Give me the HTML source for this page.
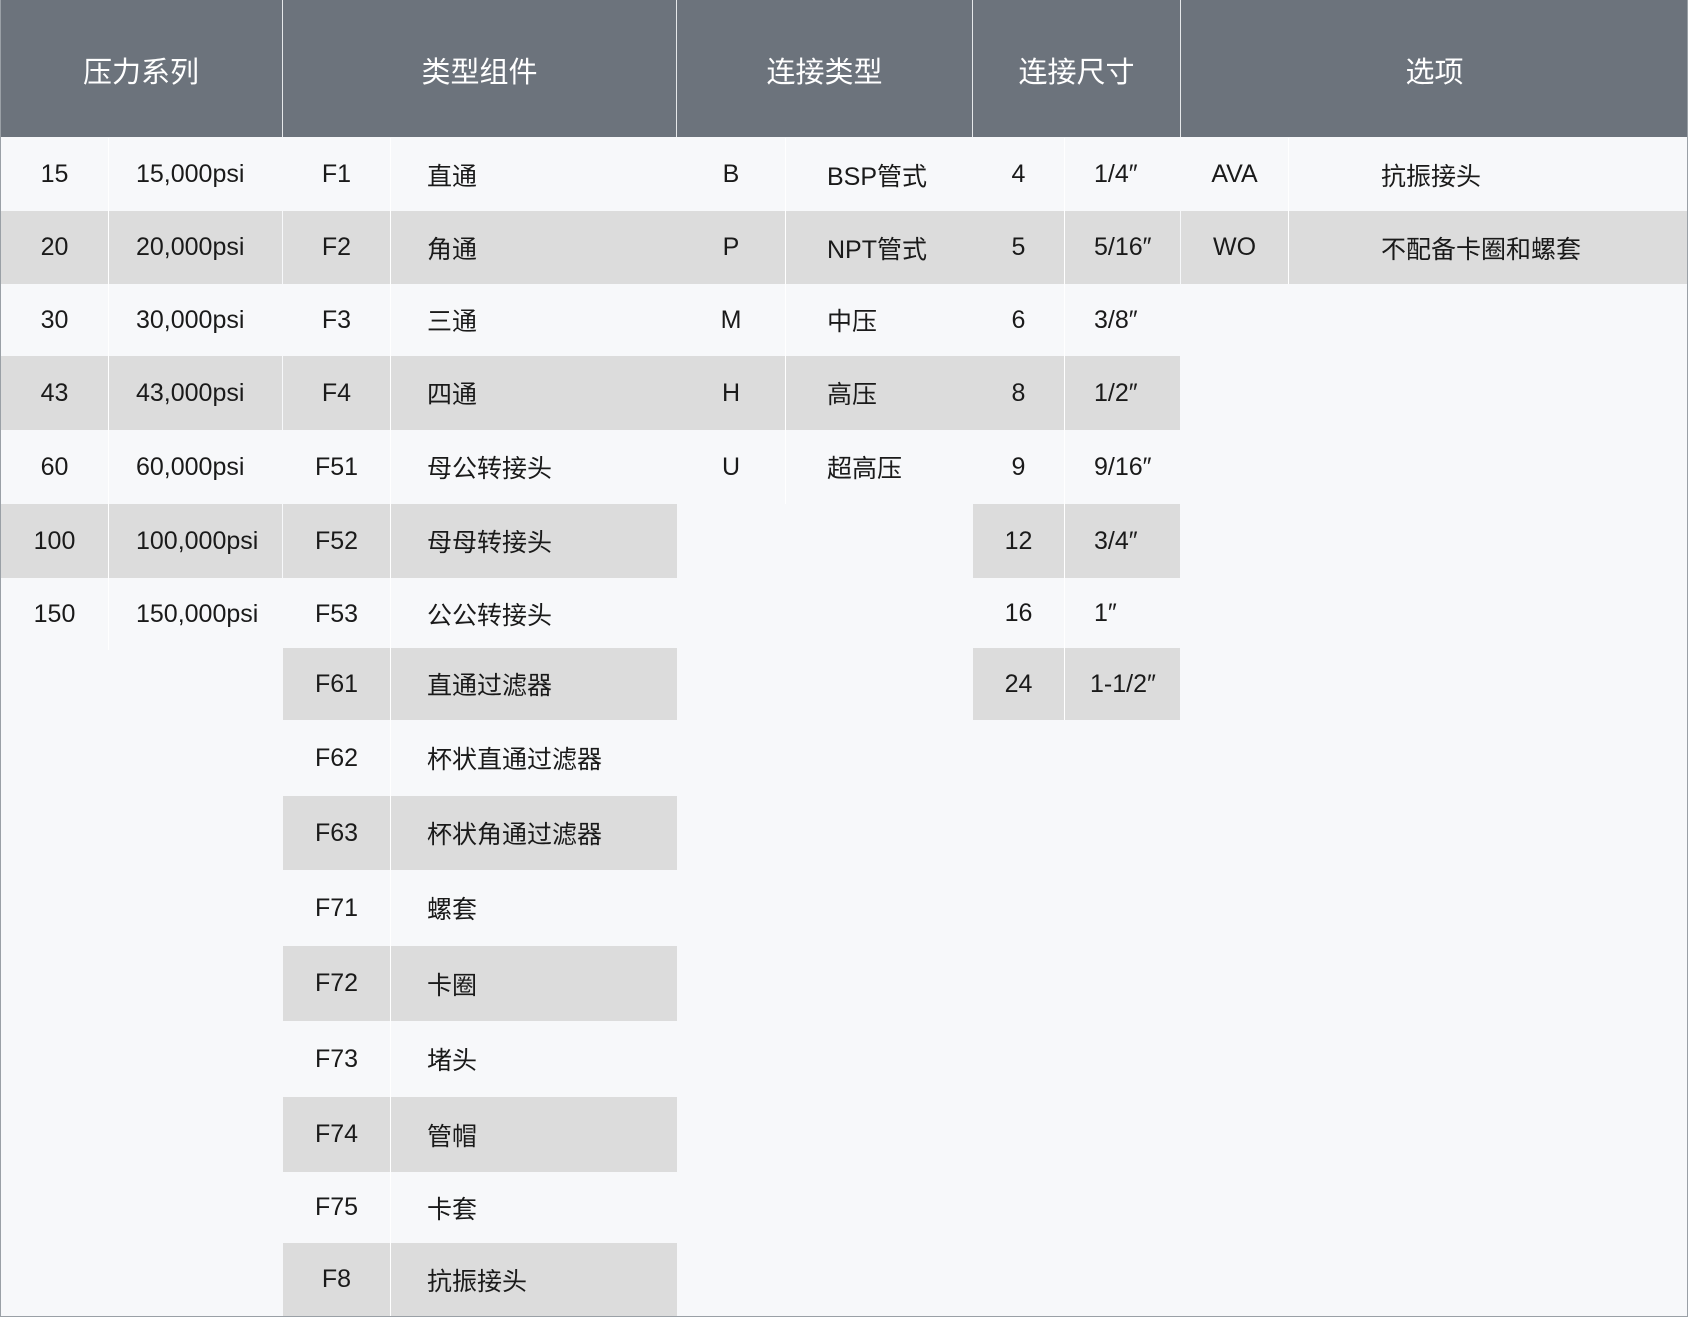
<!DOCTYPE html>
<html><head><meta charset="utf-8"><style>
*{margin:0;padding:0;box-sizing:border-box}
body{width:1688px;height:1317px;background:#f7f8fa;font-family:"Liberation Sans","Noto Sans CJK SC",sans-serif;color:#1a1a1a;position:relative;overflow:hidden}
.frame{position:absolute;left:0;top:0;width:1688px;height:1317px;border:1px solid #9aa0a6;border-top:none}
.h{position:absolute;top:0;height:137px;background:#6c737c;color:#fff;font-size:29px;line-height:146px;text-align:center;border-right:1px solid #e6e8ea}
.r{position:absolute;display:flex}
.r.g{background:#dcdcdc}
.r div{font-size:25px;white-space:nowrap;display:flex;align-items:center;height:100%}
.r div.n{justify-content:center}
.r div+div{border-left:1px solid #fff}
</style></head><body>
<div class="h" style="left:0;width:283px">压力系列</div>
<div class="h" style="left:283px;width:394px">类型组件</div>
<div class="h" style="left:677px;width:296px">连接类型</div>
<div class="h" style="left:973px;width:208px">连接尺寸</div>
<div class="h" style="left:1181px;width:507px;border-right:none">选项</div>

<!-- group1 -->
<div class="r" style="left:1px;top:138px;width:281px;height:73px"><div class="n" style="width:107px">15</div><div style="width:174px;padding-left:27px">15,000psi</div></div>
<div class="r g" style="left:1px;top:211px;width:281px;height:73px"><div class="n" style="width:107px">20</div><div style="width:174px;padding-left:27px">20,000psi</div></div>
<div class="r" style="left:1px;top:284px;width:281px;height:72px"><div class="n" style="width:107px">30</div><div style="width:174px;padding-left:27px">30,000psi</div></div>
<div class="r g" style="left:1px;top:356px;width:281px;height:74px"><div class="n" style="width:107px">43</div><div style="width:174px;padding-left:27px">43,000psi</div></div>
<div class="r" style="left:1px;top:430px;width:281px;height:74px"><div class="n" style="width:107px">60</div><div style="width:174px;padding-left:27px">60,000psi</div></div>
<div class="r g" style="left:1px;top:504px;width:281px;height:74px"><div class="n" style="width:107px">100</div><div style="width:174px;padding-left:27px">100,000psi</div></div>
<div class="r" style="left:1px;top:578px;width:281px;height:72px"><div class="n" style="width:107px">150</div><div style="width:174px;padding-left:27px">150,000psi</div></div>

<!-- group2 -->
<div class="r" style="left:283px;top:138px;width:394px;height:73px"><div class="n" style="width:107px">F1</div><div style="width:287px;padding-left:36px">直通</div></div>
<div class="r g" style="left:283px;top:211px;width:394px;height:73px"><div class="n" style="width:107px">F2</div><div style="width:287px;padding-left:36px">角通</div></div>
<div class="r" style="left:283px;top:284px;width:394px;height:72px"><div class="n" style="width:107px">F3</div><div style="width:287px;padding-left:36px">三通</div></div>
<div class="r g" style="left:283px;top:356px;width:394px;height:74px"><div class="n" style="width:107px">F4</div><div style="width:287px;padding-left:36px">四通</div></div>
<div class="r" style="left:283px;top:430px;width:394px;height:74px"><div class="n" style="width:107px">F51</div><div style="width:287px;padding-left:36px">母公转接头</div></div>
<div class="r g" style="left:283px;top:504px;width:394px;height:74px"><div class="n" style="width:107px">F52</div><div style="width:287px;padding-left:36px">母母转接头</div></div>
<div class="r" style="left:283px;top:578px;width:394px;height:72px"><div class="n" style="width:107px">F53</div><div style="width:287px;padding-left:36px">公公转接头</div></div>
<div class="r g" style="left:283px;top:648px;width:394px;height:72px"><div class="n" style="width:107px">F61</div><div style="width:287px;padding-left:36px">直通过滤器</div></div>
<div class="r" style="left:283px;top:720px;width:394px;height:76px"><div class="n" style="width:107px">F62</div><div style="width:287px;padding-left:36px">杯状直通过滤器</div></div>
<div class="r g" style="left:283px;top:796px;width:394px;height:74px"><div class="n" style="width:107px">F63</div><div style="width:287px;padding-left:36px">杯状角通过滤器</div></div>
<div class="r" style="left:283px;top:870px;width:394px;height:76px"><div class="n" style="width:107px">F71</div><div style="width:287px;padding-left:36px">螺套</div></div>
<div class="r g" style="left:283px;top:946px;width:394px;height:75px"><div class="n" style="width:107px">F72</div><div style="width:287px;padding-left:36px">卡圈</div></div>
<div class="r" style="left:283px;top:1021px;width:394px;height:76px"><div class="n" style="width:107px">F73</div><div style="width:287px;padding-left:36px">堵头</div></div>
<div class="r g" style="left:283px;top:1097px;width:394px;height:75px"><div class="n" style="width:107px">F74</div><div style="width:287px;padding-left:36px">管帽</div></div>
<div class="r" style="left:283px;top:1172px;width:394px;height:71px"><div class="n" style="width:107px">F75</div><div style="width:287px;padding-left:36px">卡套</div></div>
<div class="r g" style="left:283px;top:1243px;width:394px;height:73px"><div class="n" style="width:107px">F8</div><div style="width:287px;padding-left:36px">抗振接头</div></div>

<!-- group3 -->
<div class="r" style="left:677px;top:138px;width:296px;height:73px"><div class="n" style="width:108px">B</div><div style="width:188px;padding-left:41px">BSP管式</div></div>
<div class="r g" style="left:677px;top:211px;width:296px;height:73px"><div class="n" style="width:108px">P</div><div style="width:188px;padding-left:41px">NPT管式</div></div>
<div class="r" style="left:677px;top:284px;width:296px;height:72px"><div class="n" style="width:108px">M</div><div style="width:188px;padding-left:41px">中压</div></div>
<div class="r g" style="left:677px;top:356px;width:296px;height:74px"><div class="n" style="width:108px">H</div><div style="width:188px;padding-left:41px">高压</div></div>
<div class="r" style="left:677px;top:430px;width:296px;height:74px"><div class="n" style="width:108px">U</div><div style="width:188px;padding-left:41px">超高压</div></div>

<!-- group4 -->
<div class="r" style="left:973px;top:138px;width:207px;height:73px"><div class="n" style="width:91px">4</div><div style="width:116px;padding-left:29px">1/4″</div></div>
<div class="r g" style="left:973px;top:211px;width:207px;height:73px"><div class="n" style="width:91px">5</div><div style="width:116px;padding-left:29px">5/16″</div></div>
<div class="r" style="left:973px;top:284px;width:207px;height:72px"><div class="n" style="width:91px">6</div><div style="width:116px;padding-left:29px">3/8″</div></div>
<div class="r g" style="left:973px;top:356px;width:207px;height:74px"><div class="n" style="width:91px">8</div><div style="width:116px;padding-left:29px">1/2″</div></div>
<div class="r" style="left:973px;top:430px;width:207px;height:74px"><div class="n" style="width:91px">9</div><div style="width:116px;padding-left:29px">9/16″</div></div>
<div class="r g" style="left:973px;top:504px;width:207px;height:74px"><div class="n" style="width:91px">12</div><div style="width:116px;padding-left:29px">3/4″</div></div>
<div class="r" style="left:973px;top:578px;width:207px;height:70px"><div class="n" style="width:91px">16</div><div style="width:116px;padding-left:29px">1″</div></div>
<div class="r g" style="left:973px;top:648px;width:207px;height:72px"><div class="n" style="width:91px">24</div><div style="width:116px;padding-left:25px">1-1/2″</div></div>

<!-- group5 -->
<div class="r" style="left:1181px;top:138px;width:506px;height:73px"><div class="n" style="width:107px">AVA</div><div style="width:399px;padding-left:92px">抗振接头</div></div>
<div class="r g" style="left:1181px;top:211px;width:506px;height:73px"><div class="n" style="width:107px">WO</div><div style="width:399px;padding-left:92px">不配备卡圈和螺套</div></div>

<div class="frame"></div>
</body></html>
